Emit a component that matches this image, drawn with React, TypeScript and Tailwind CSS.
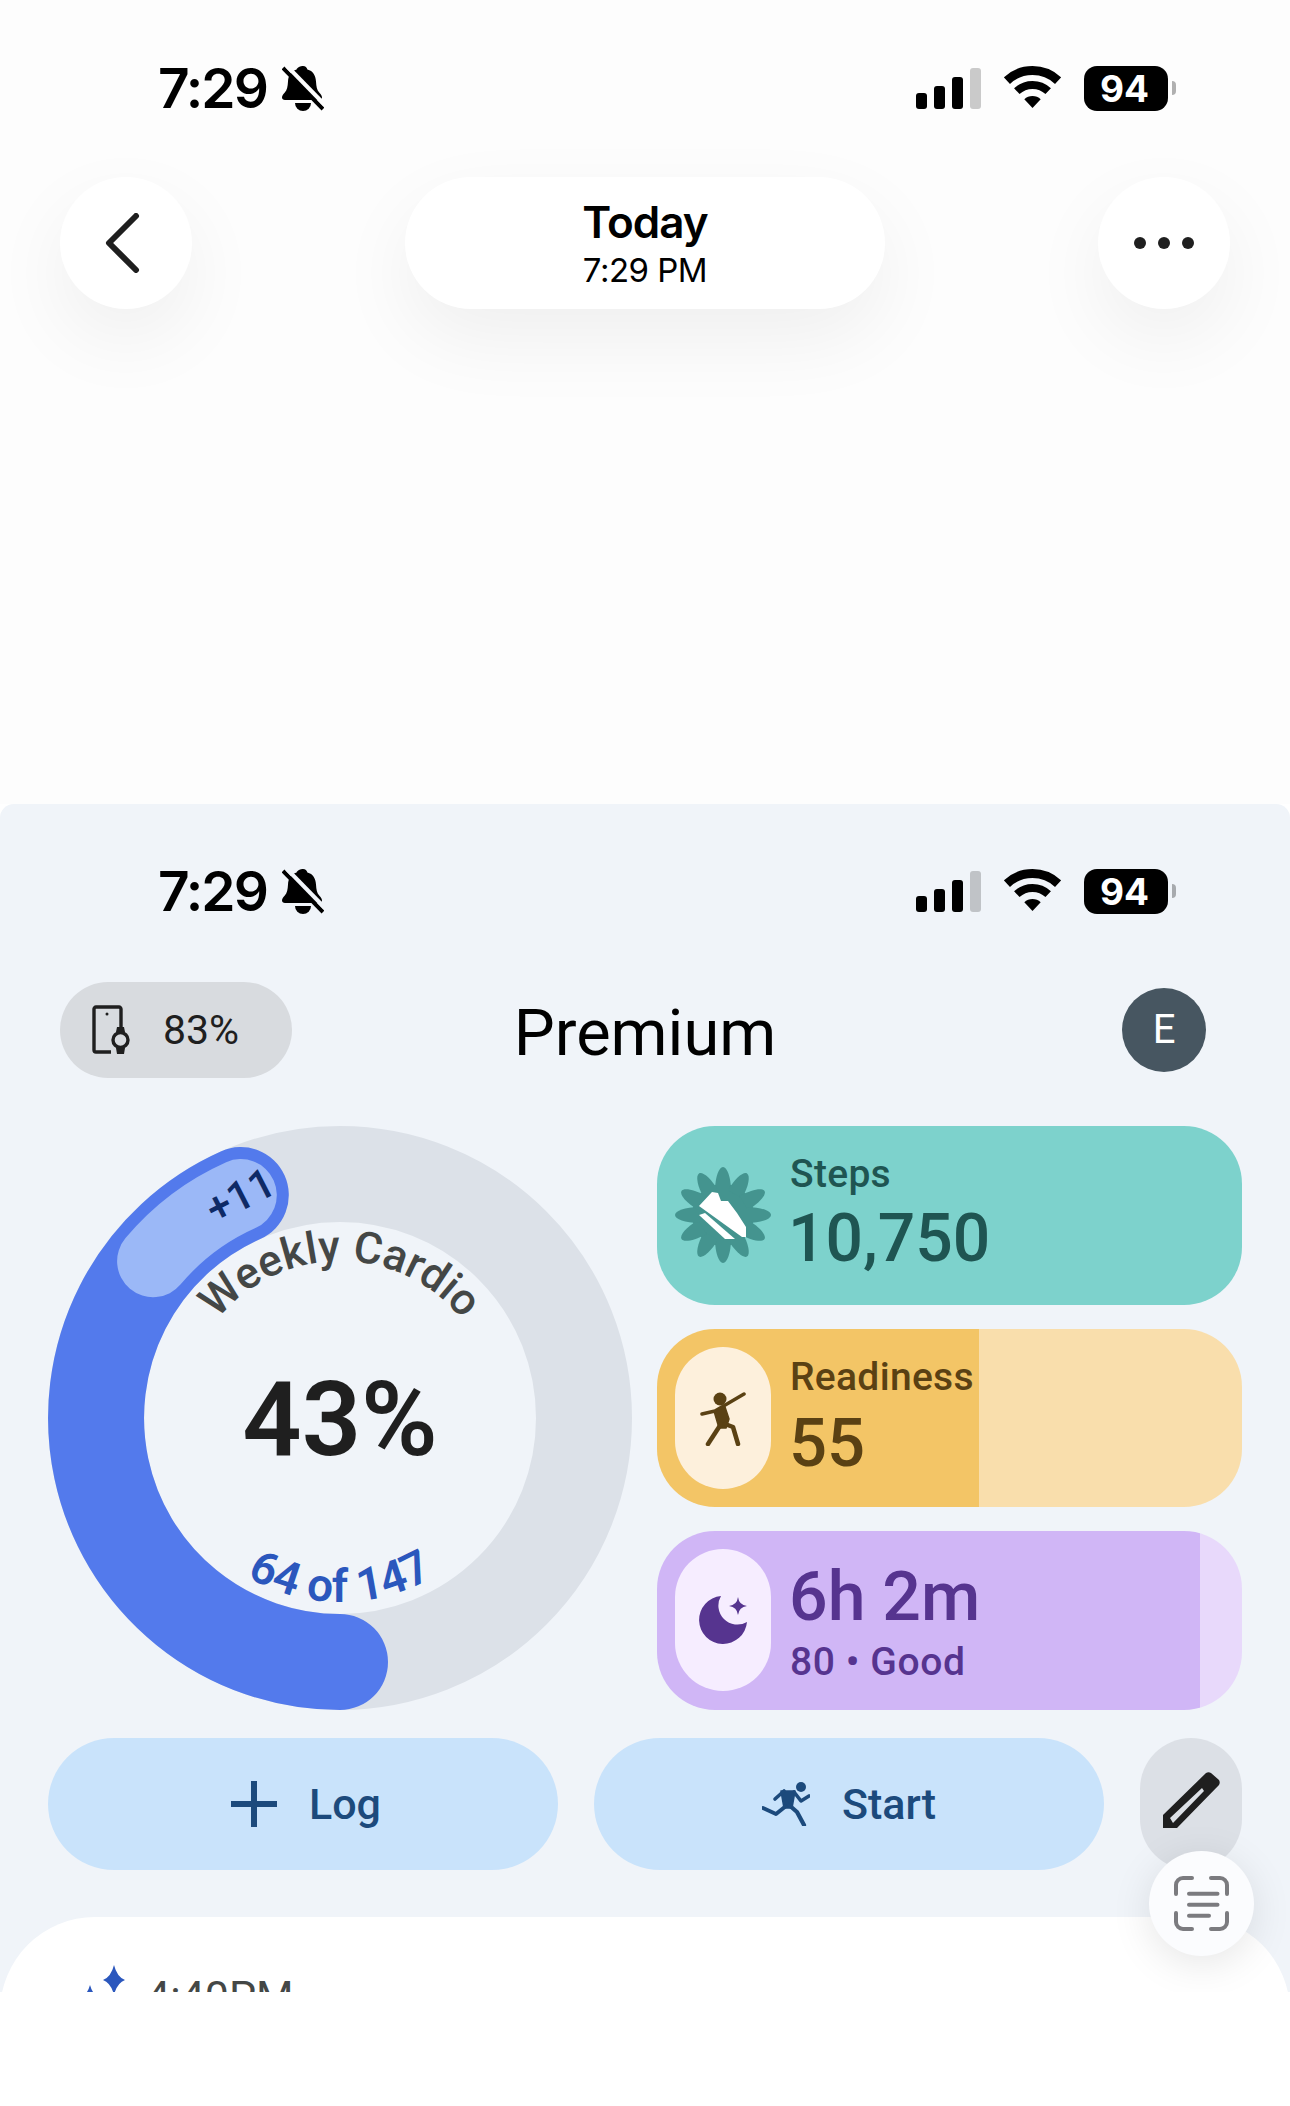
import * as React from "react";

const sans = "font-['Inter',sans-serif]";

function Signal() {
	return (
		<div className="flex items-end gap-[7px] h-[41px]">
			<div className="w-[11px] h-[16px] rounded-[3px] bg-black" />
			<div className="w-[11px] h-[23px] rounded-[3px] bg-black" />
			<div className="w-[11px] h-[32px] rounded-[3px] bg-black" />
			<div className="w-[11px] h-[41px] rounded-[3px] bg-black/20" />
		</div>
	);
}

function Wifi() {
	return (
		<svg width="57" height="42" viewBox="0 0 57 42" fill="none" stroke="#000">
			<path d="M2.9 14.6A37.5 37.5 0 0 1 54.1 14.6" strokeWidth="9" />
			<path d="M12.8 25.2A23 23 0 0 1 44.2 25.2" strokeWidth="8" />
			<path d="M28.5 42L20.3 33.2A12 12 0 0 1 36.7 33.2Z" fill="#000" stroke="none" />
		</svg>
	);
}

function BellOff() {
	return (
		<svg width="42" height="45" viewBox="0 0 42 45">
			<path
				d="M21 0c2.4 0 4 1.6 4.4 3.6 5.6 1.4 8.2 6 8.6 12 .3 5 .9 8.6 3.2 11 1.6 1.7 2.8 3.2 2.8 5 0 1.6-1.2 2.4-3 2.4H3c-1.8 0-3-.8-3-2.4 0-1.800 1.200-3.300 2.800-5 2.300-2.400 2.900-6 3.200-11 .4-6 3-10.600 8.600-12C15 1.600 18.600 0 21 0z"
				fill="#000"
			/>
			<path d="M13 37h16a8 8 0 0 1-16 0z" fill="#000" />
			<path d="M1 2l40 41" stroke="#000" strokeWidth="4" />
			<path d="M5 0l38 39" stroke="currentColor" strokeWidth="4" />
		</svg>
	);
}

function StatusBar({ tint }: Readonly<{ tint: string }>) {
	return (
		<div className={`flex items-center justify-between h-[72px] pl-[158px] pr-[114px] ${sans}`}>
			<div className="flex items-center gap-[15px]">
				<span className="text-[55px] leading-none font-semibold tracking-[-2px] text-black">7:29</span>
				<span className={tint}>
					<BellOff />
				</span>
			</div>
			<div className="flex items-center">
				<Signal />
				<div className="ml-[23px] mb-[2px]">
					<Wifi />
				</div>
				<div className="ml-[23px] w-[84px] h-[45px] rounded-[13px] bg-black flex items-center justify-center pr-[3px]">
					<span className="text-[37px] leading-none font-bold text-white">94</span>
				</div>
				<div className="ml-[4px] w-[4px] h-[14px] rounded-r-full bg-black/30" />
			</div>
		</div>
	);
}

function TopHeader() {
	return (
		<div className="flex items-center justify-between mx-[60px] mt-[53px]">
			<div className="w-[132px] h-[132px] rounded-full bg-white shadow-[0_30px_80px_rgba(0,0,0,0.06)] flex items-center justify-center pr-[6px]">
				<svg width="36" height="60" viewBox="0 0 36 60" fill="none" stroke="#1f1f1f" strokeWidth="6" strokeLinecap="round" strokeLinejoin="round">
					<path d="M31 3L4 30l27 27" />
				</svg>
			</div>
			<div className={`w-[480px] h-[132px] rounded-full bg-white shadow-[0_30px_80px_rgba(0,0,0,0.06)] flex flex-col items-center justify-center text-black pt-[2px] ${sans}`}>
				<span className="text-[44px] leading-[52px] font-semibold tracking-[-1px]">Today</span>
				<span className="text-[33px] leading-[44px] tracking-[-0.5px]">7:29 PM</span>
			</div>
			<div className="w-[132px] h-[132px] rounded-full bg-white shadow-[0_30px_80px_rgba(0,0,0,0.06)] flex items-center justify-center gap-[12px]">
				<div className="w-[12px] h-[12px] rounded-full bg-[#1f1f1f]" />
				<div className="w-[12px] h-[12px] rounded-full bg-[#1f1f1f]" />
				<div className="w-[12px] h-[12px] rounded-full bg-[#1f1f1f]" />
			</div>
		</div>
	);
}

function PhoneWatch() {
	return (
		<svg width="40" height="50" viewBox="0 0 40 50" fill="none" stroke="#1f1f1f" strokeWidth="3.4">
			<path d="M29 22V4a2 2 0 0 0-2-2H4a2 2 0 0 0-2 2v41a2 2 0 0 0 2 2h15" />
			<circle cx="15" cy="9" r="1.500" fill="#1f1f1f" stroke="none" />
			<circle cx="28.500" cy="35" r="7.500" />
			<path d="M24 27l1-5h7l1 5zM24 43l1 6h7l1-6z" fill="#1f1f1f" stroke="none" />
		</svg>
	);
}

function Ring() {
	return (
		<svg width="584" height="584" viewBox="0 0 584 584" fill="none" className="shrink-0">
			<circle cx="292" cy="292" r="244" stroke="#dce1e8" strokeWidth="96" />
			<path d="M292 536A244 244 0 0 1 192.800 69.100" stroke="#537aec" strokeWidth="96" strokeLinecap="round" />
			<path d="M105.100 135.200A244 244 0 0 1 192.800 69.100" stroke="#9bb8f7" strokeWidth="72" strokeLinecap="round" />
			<path id="ringTop" d="M135 292A157 157 0 0 1 449 292" />
			<path id="ringBottom" d="M108 292A184 184 0 0 0 476 292" />
			<text className="text-[44px] fill-[#444746] font-medium">
				<textPath href="#ringTop" startOffset="50%" textAnchor="middle">
					Weekly Cardio
				</textPath>
			</text>
			<text className="text-[46px] fill-[#2b57bd] font-semibold">
				<textPath href="#ringBottom" startOffset="50%" textAnchor="middle">
					64 of 147
				</textPath>
			</text>
			<text x="192" y="84" textAnchor="middle" transform="rotate(-27 192 69)" className="text-[42px] fill-[#0e2a66] font-medium">
				+11
			</text>
			<text x="292" y="329" textAnchor="middle" className="text-[104px] fill-[#1f1f1f] font-semibold">
				43%
			</text>
		</svg>
	);
}

function Burst() {
	const petals = [0, 30, 60, 90, 120, 150, 180, 210, 240, 270, 300, 330];
	return (
		<svg width="96" height="96" viewBox="-48 -48 96 96">
			<circle r="31" fill="#44948f" />
			{petals.map((a) => (
				<path key={a} d="M0-48C4-48 8-38 8-24H-8C-8-38-4-48 0-48Z" fill="#44948f" transform={`rotate(${a})`} />
			))}
			<path d="M-24-9L-11-23-5-22-2-14 5-14 14-2 23 12V22H19Z" fill="#fff" />
			<path d="M-24 0L-18-2 12 24H2Z" fill="#fff" />
		</svg>
	);
}

function Figure() {
	return (
		<svg width="46" height="56" viewBox="0 0 46 56" fill="#5a4113" stroke="#5a4113" strokeLinecap="round" strokeLinejoin="round">
			<circle cx="20" cy="9" r="6.500" stroke="none" />
			<path d="M2 24l13-3L44 4" fill="none" strokeWidth="3.500" />
			<path d="M14 21l11-4 4 12-3 9h-7z" strokeWidth="1.500" />
			<path d="M21 34L8 54" fill="none" strokeWidth="4.500" />
			<path d="M25 34l8 3 5 17" fill="none" strokeWidth="4.500" />
		</svg>
	);
}

function Moon() {
	return (
		<svg width="48" height="48" viewBox="0 0 48 48" fill="#56348f">
			<path d="M22 0A24 24 0 1 0 48 26A19 19 0 0 1 22 0Z" />
			<path d="M39 1Q40 9 48 10Q40 11 39 19Q38 11 30 10Q38 9 39 1Z" />
		</svg>
	);
}

function Runner() {
	return (
		<svg width="48" height="44" viewBox="0 0 48 44" fill="#1c4a7c" stroke="#1c4a7c" strokeLinecap="round" strokeLinejoin="round">
			<circle cx="39" cy="5" r="5" stroke="none" />
			<path d="M19 9h14l-3 17h-8z" strokeWidth="1.500" />
			<path d="M24 24L14 32 1 26" fill="none" strokeWidth="4" />
			<path d="M27 23l8 7 7 13" fill="none" strokeWidth="4.200" />
			<path d="M32 10l7 9 8-5" fill="none" strokeWidth="3.600" />
			<path d="M22 9l-9 8" fill="none" strokeWidth="3.600" />
		</svg>
	);
}

function Cards() {
	return (
		<div className="flex-1 flex flex-col gap-[24px]">
			<div className="h-[178.5px] rounded-[58px] bg-[#7dd2cc] flex pl-[18px] text-[#1f5552]">
				<div className="w-[96px] flex items-center justify-center">
					<Burst />
				</div>
				<div className="ml-[19px] pt-[26px] flex flex-col">
					<span className="text-[39px] leading-[44px] font-medium tracking-[0.3px]">Steps</span>
					<span className="mt-[10px] -ml-[2px] text-[66px] leading-[66px] font-medium">10,750</span>
				</div>
			</div>
			<div className="h-[178.5px] rounded-[58px] bg-[linear-gradient(90deg,#f3c566_322px,#f9deac_322px)] flex items-center pl-[18px] text-[#5a4113]">
				<div className="w-[96px] h-[142px] rounded-[48px] bg-[#fdf0dc] flex items-center justify-center">
					<Figure />
				</div>
				<div className="ml-[19px] flex flex-col self-start pt-[26px]">
					<span className="text-[39px] leading-[44px] font-medium tracking-[0.3px]">Readiness</span>
					<span className="mt-[11px] -ml-[1px] text-[67px] leading-[66px] font-medium">55</span>
				</div>
			</div>
			<div className="h-[178.5px] rounded-[58px] bg-[linear-gradient(90deg,#d0b6f6_543px,#e8d9fb_543px)] flex items-center pl-[18px] text-[#56348f]">
				<div className="w-[96px] h-[142px] rounded-[48px] bg-[#f6edff] flex items-center justify-center">
					<Moon />
				</div>
				<div className="ml-[19px] flex flex-col self-start pt-[33px]">
					<span className="-ml-[1px] text-[68px] leading-[66px] font-medium">6h 2m</span>
					<span className="mt-[10px] text-[39px] leading-[44px] font-medium tracking-[0.6px]">80 • Good</span>
				</div>
			</div>
		</div>
	);
}

function Actions() {
	return (
		<div className="flex gap-[36px] mx-[48px] mt-[28px]">
			<div className="w-[510px] h-[132px] rounded-full bg-[#c9e3fb] flex items-center justify-center gap-[32px] pl-[6px] text-[#1c4a7c]">
				<svg width="46" height="46" viewBox="0 0 46 46" stroke="#1c4a7c" strokeWidth="6">
					<path d="M23 0v46M0 23h46" />
				</svg>
				<span className="text-[43px] font-medium">Log</span>
			</div>
			<div className="w-[510px] h-[132px] rounded-full bg-[#c9e3fb] flex items-center justify-center gap-[32px] text-[#1c4a7c]">
				<Runner />
				<span className="text-[43px] font-medium">Start</span>
			</div>
			<div className="w-[102px] h-[132px] rounded-full bg-[#dce0e6] flex items-center justify-center pb-[8px]">
				<svg width="62" height="60" viewBox="0 0 62 60">
					<path
						fillRule="evenodd"
						fill="#1f1f1f"
						d="M3 58V45L46 3a5 5 0 0 1 5 0l8 7a5 5 0 0 1 0 5L17 58ZM10 48l3 5 31-32-2-3Z"
					/>
				</svg>
			</div>
		</div>
	);
}

function ScanButton() {
	return (
		<div className="absolute left-[1149px] top-[1047px] w-[105px] h-[105px] rounded-full bg-[#fbfcfe] shadow-[0_8px_40px_rgba(0,0,0,0.10)] flex items-center justify-center">
			<svg width="57" height="57" viewBox="0 0 57 57" fill="none" stroke="#7b7b7f" strokeWidth="4" strokeLinecap="round">
				<path d="M3 19V10a7 7 0 0 1 7-7h9M38 3h9a7 7 0 0 1 7 7v9M54 38v9a7 7 0 0 1-7 7h-9M19 54h-9a7 7 0 0 1-7-7v-9" />
				<path d="M16 18.700h28.500M16 29.700h28.500M16 40.700h20" />
			</svg>
		</div>
	);
}

export default function App() {
	return (
		<div className="w-[1290px] h-[2106px] bg-white overflow-hidden font-['Roboto',sans-serif]">
			<div className="h-[804px] bg-[#fdfdfd] pt-[52px]">
				<StatusBar tint="text-[#fdfdfd]" />
				<TopHeader />
			</div>
			<div className="relative h-[1188px] rounded-t-[14px] bg-[#f0f4f9] overflow-hidden pt-[51px]">
				<StatusBar tint="text-[#f0f4f9]" />
				<div className="grid grid-cols-[1fr_auto_1fr] items-center mx-[60px] mt-[55px] h-[96px]">
					<div className="w-[232px] h-[96px] rounded-full bg-[#d8dbdf] flex items-center pl-[32px] gap-[31px]">
						<PhoneWatch />
						<span className="mt-[2px] text-[41px] text-[#1f1f1f]">83%</span>
					</div>
					<span className="mt-[6px] text-[65px] leading-[80px] text-black">Premium</span>
					<div className="justify-self-end mr-[24px] w-[84px] h-[84px] rounded-full bg-[#475661] flex items-center justify-center text-[40px] text-white">
						E
					</div>
				</div>
				<div className="flex gap-[25px] mx-[48px] mt-[48px]">
					<Ring />
					<Cards />
				</div>
				<Actions />
				<div className="mt-[47px] h-[120px] rounded-t-[95px] bg-white flex items-start pl-[78px] gap-[10px]">
					<svg width="58" height="60" viewBox="0 0 58 60" fill="#2b57bd" className="mt-[48px] shrink-0">
						<path d="M36 0Q39 12 47 15Q39 18 36 30Q33 18 25 15Q33 12 36 0Z" />
						<path d="M12 20Q15 31 24 34Q15 37 12 48Q9 37 0 34Q9 31 12 20Z" />
					</svg>
					<span className="mt-[55px] text-[43px] leading-[48px] text-[#444746]">4:40PM</span>
				</div>
				<ScanButton />
			</div>
		</div>
	);
}
